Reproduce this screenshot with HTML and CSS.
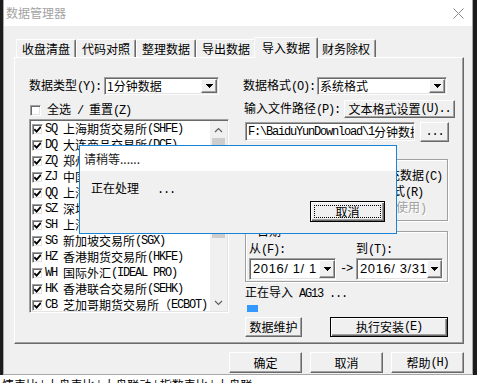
FILE: index.html
```html
<!DOCTYPE html>
<html lang="zh-CN">
<head>
    <meta charset="UTF-8">
    <title>数据管理器</title>
    <link rel="stylesheet" href="styles.css">
</head>
<body>
    <div class="desk">
        <!-- 主窗口 -->
        <div class="win">
            <div class="titlebar">
                <span class="title">数据管理器</span>
                <svg class="close" width="11" height="11" viewBox="0 0 11 11"><path d="M0.5 0.5L10.5 10.5M10.5 0.5L0.5 10.5" stroke="#8c8c8c" stroke-width="1" fill="none"/></svg>
            </div>

            <div class="client">
                <div class="tabs">
                    <div class="tab">收盘清盘</div>
                    <div class="tab">代码对照</div>
                    <div class="tab">整理数据</div>
                    <div class="tab">导出数据</div>
                    <div class="tab on">导入数据</div>
                    <div class="tab">财务除权</div>
                </div>

                <div class="panel">
                    <!-- 左列：市场列表 -->
                    <div class="col-l">
                        <div class="row">
                            <span class="lbl-type">数据类型<span class="a">(Y):</span></span>
                            <div class="combo sunk w-type">
                                <span class="val">1分钟数据</span>
                                <span class="drop raised"><svg width="7" height="4" viewBox="0 0 7 4" shape-rendering="crispEdges"><path d="M0 0h7v1H0zM1 1h5v1H1zM2 2h3v1H2zM3 3h1v1H3z"/></svg></span>
                            </div>
                        </div>

                        <div class="row check-all">
                            <span class="chk sunk"></span>
                            <span class="chk-text">全选<span class="a"> / </span>重置<span class="a">(Z)</span></span>
                        </div>

                        <div class="listbox sunk">
                            <div class="items">
                                <div class="item"><span class="chk sunk"><svg width="7" height="7" viewBox="0 0 7 7"><path d="M0.3 3.2L2.6 5.6L6.8 0.8" stroke="#000" stroke-width="1.8" fill="none"/></svg></span><span class="a">SQ </span>上海期货交易所<span class="a">(SHFE)</span></div>
                                <div class="item"><span class="chk sunk"><svg width="7" height="7" viewBox="0 0 7 7"><path d="M0.3 3.2L2.6 5.6L6.8 0.8" stroke="#000" stroke-width="1.8" fill="none"/></svg></span><span class="a">DQ </span>大连商品交易所<span class="a">(DCE)</span></div>
                                <div class="item"><span class="chk sunk"><svg width="7" height="7" viewBox="0 0 7 7"><path d="M0.3 3.2L2.6 5.6L6.8 0.8" stroke="#000" stroke-width="1.8" fill="none"/></svg></span><span class="a">ZQ </span>郑州商品交易所<span class="a">(CZCE)</span></div>
                                <div class="item"><span class="chk sunk"><svg width="7" height="7" viewBox="0 0 7 7"><path d="M0.3 3.2L2.6 5.6L6.8 0.8" stroke="#000" stroke-width="1.8" fill="none"/></svg></span><span class="a">ZJ </span>中国金融期货交易所</div>
                                <div class="item"><span class="chk sunk"><svg width="7" height="7" viewBox="0 0 7 7"><path d="M0.3 3.2L2.6 5.6L6.8 0.8" stroke="#000" stroke-width="1.8" fill="none"/></svg></span><span class="a">QQ </span>上海黄金交易所</div>
                                <div class="item"><span class="chk sunk"><svg width="7" height="7" viewBox="0 0 7 7"><path d="M0.3 3.2L2.6 5.6L6.8 0.8" stroke="#000" stroke-width="1.8" fill="none"/></svg></span><span class="a">SZ </span>深圳证券交易所</div>
                                <div class="item"><span class="chk sunk"><svg width="7" height="7" viewBox="0 0 7 7"><path d="M0.3 3.2L2.6 5.6L6.8 0.8" stroke="#000" stroke-width="1.8" fill="none"/></svg></span><span class="a">SH </span>上海证券交易所</div>
                                <div class="item"><span class="chk sunk"><svg width="7" height="7" viewBox="0 0 7 7"><path d="M0.3 3.2L2.6 5.6L6.8 0.8" stroke="#000" stroke-width="1.8" fill="none"/></svg></span><span class="a">SG </span>新加坡交易所<span class="a">(SGX)</span></div>
                                <div class="item"><span class="chk sunk"><svg width="7" height="7" viewBox="0 0 7 7"><path d="M0.3 3.2L2.6 5.6L6.8 0.8" stroke="#000" stroke-width="1.8" fill="none"/></svg></span><span class="a">HZ </span>香港期货交易所<span class="a">(HKFE)</span></div>
                                <div class="item"><span class="chk sunk"><svg width="7" height="7" viewBox="0 0 7 7"><path d="M0.3 3.2L2.6 5.6L6.8 0.8" stroke="#000" stroke-width="1.8" fill="none"/></svg></span><span class="a">WH </span>国际外汇<span class="a">(IDEAL PRO)</span></div>
                                <div class="item"><span class="chk sunk"><svg width="7" height="7" viewBox="0 0 7 7"><path d="M0.3 3.2L2.6 5.6L6.8 0.8" stroke="#000" stroke-width="1.8" fill="none"/></svg></span><span class="a">HK </span>香港联合交易所<span class="a">(SEHK)</span></div>
                                <div class="item"><span class="chk sunk"><svg width="7" height="7" viewBox="0 0 7 7"><path d="M0.3 3.2L2.6 5.6L6.8 0.8" stroke="#000" stroke-width="1.8" fill="none"/></svg></span><span class="a">CB </span>芝加哥期货交易所（<span class="a">ECBOT)</span></div>
                            </div>
                            <div class="vscroll">
                                <span class="sarrow"><svg width="9" height="6" viewBox="0 0 9 6"><path d="M1 5L4.5 1.5L8 5" stroke="#606060" stroke-width="1.2" fill="none"/></svg></span>
                                <span class="thumb"></span>
                                <span class="sarrow down"><svg width="9" height="6" viewBox="0 0 9 6"><path d="M1 1L4.5 4.5L8 1" stroke="#606060" stroke-width="1.2" fill="none"/></svg></span>
                            </div>
                        </div>
                    </div>

                    <!-- 右列：导入设置 -->
                    <div class="col-r">
                        <div class="row">
                            <span class="lbl-fmt">数据格式<span class="a">(O):</span></span>
                            <div class="combo sunk w-fmt">
                                <span class="val">系统格式</span>
                                <span class="drop raised"><svg width="7" height="4" viewBox="0 0 7 4" shape-rendering="crispEdges"><path d="M0 0h7v1H0zM1 1h5v1H1zM2 2h3v1H2zM3 3h1v1H3z"/></svg></span>
                            </div>
                        </div>

                        <div class="row path-row">
                            <span class="lbl-path">输入文件路径<span class="a">(P):</span></span>
                            <span class="btn raised btn-txtfmt">文本格式设置<span class="a">(U)..</span></span>
                        </div>

                        <div class="row file-row">
                            <span class="input sunk"><span class="a">F:\BaiduYunDownload\1</span>分钟数据</span>
                            <span class="btn raised btn-browse"><span class="a">...</span></span>
                        </div>

                        <div class="group g-mode">
                            <div class="opt o1">补充数据<span class="a">(C)</span></div>
                            <div class="opt o2">按文本格式<span class="a">(R)</span></div>
                            <div class="opt o3 off"><span class="a">(</span>暂不使用<span class="a">)</span></div>
                        </div>

                        <div class="group g-date">
                            <span class="cap">日期</span>
                            <div class="date-grid">
                                <span>从<span class="a">(F):</span></span>
                                <span></span>
                                <span>到<span class="a">(T):</span></span>
                                <div class="datebox sunk">
                                    <span class="dval">2016/ 1/ 1</span>
                                    <span class="drop raised"><svg width="7" height="4" viewBox="0 0 7 4" shape-rendering="crispEdges"><path d="M0 0h7v1H0zM1 1h5v1H1zM2 2h3v1H2zM3 3h1v1H3z"/></svg></span>
                                </div>
                                <span class="arrow a">-&gt;</span>
                                <div class="datebox sunk">
                                    <span class="dval">2016/ 3/31</span>
                                    <span class="drop raised"><svg width="7" height="4" viewBox="0 0 7 4" shape-rendering="crispEdges"><path d="M0 0h7v1H0zM1 1h5v1H1zM2 2h3v1H2zM3 3h1v1H3z"/></svg></span>
                                </div>
                            </div>
                        </div>

                        <div class="status">正在导入<span class="a"> AG13 ...</span></div>
                        <div class="progress"><span class="bar" style="width: 11px"></span></div>

                        <div class="row act-row">
                            <span class="btn raised btn-maint">数据维护</span>
                            <span class="btn def btn-run">执行安装<span class="a">(E)</span></span>
                        </div>
                    </div>
                </div>

                <div class="footer">
                    <span class="btn raised">确定</span>
                    <span class="btn raised">取消</span>
                    <span class="btn raised">帮助<span class="a">(H)</span></span>
                </div>
            </div>
        </div>

        <!-- 窗口下方露出的行情软件 -->
        <div class="under">情表比 | 大盘表比 | 大盘联动 | 指数表比 | 大盘联</div>

        <!-- 进度对话框 -->
        <div class="wait">
            <div class="wait-title">请稍等......</div>
            <div class="wait-body">
                <div class="wait-msg">正在处理<span class="a dots">...</span></div>
                <span class="btn def btn-cancel"><span class="focus">取消</span></span>
            </div>
        </div>
    </div>
</body>
</html>
```

FILE: styles.css
```css
/* 基础样式 */
* {
    margin: 0;
    padding: 0;
    box-sizing: border-box;
}

html, body {
    background: #1c1c1c;
}

body {
    width: 477px;
    height: 383px;
    overflow: hidden;
    font-family: "Noto Sans CJK SC", "Liberation Sans", sans-serif;
    font-size: 12px;
    line-height: 14px;
    color: #000;
}

/* 宋体半角字母（等宽 6px） */
.a {
    font-family: "Liberation Mono", "Noto Sans CJK SC", monospace;
    font-size: 12px;
    letter-spacing: -1.2px;
    white-space: pre;
}

.desk {
    position: relative;
    width: 477px;
    height: 383px;
    overflow: hidden;
}

/* 经典3D边框 */
.sunk {
    background: #fff;
    border: 1px solid;
    border-color: #a0a0a0 #fff #fff #a0a0a0;
    box-shadow: inset 1px 1px #696969, inset -1px -1px #e3e3e3;
}

.raised {
    background: #f0f0f0;
    border: 1px solid;
    border-color: #fff #696969 #696969 #fff;
    box-shadow: inset -1px -1px #a0a0a0;
}

.btn {
    display: flex;
    align-items: center;
    justify-content: center;
    white-space: nowrap;
}

.btn.def {
    background: #f0f0f0;
    border: 1px solid #000;
    box-shadow: inset 1px 1px #fff, inset -1px -1px #696969, inset -2px -2px #a0a0a0;
}

/* 主窗口 */
.win {
    margin-left: 3px;
    width: 470px;
    height: 375px;
    background: #f0f0f0;
    border: 1px solid #a8a8a8;
    border-top: 0;
}

.titlebar {
    height: 26px;
    background: #fff;
    display: flex;
    align-items: center;
    justify-content: space-between;
    padding: 0 8px 0 2px;
}

.title {
    color: #a3a3a3;
}

.close {
    display: block;
}

.client {
    padding: 11px 0 0 10px;
}

/* 选项卡 */
.tabs {
    display: flex;
    align-items: flex-end;
    height: 20px;
    margin-left: 2px;
}

.tab {
    width: 60px;
    height: 18px;
    display: flex;
    align-items: center;
    justify-content: center;
    border-top: 1px solid #fff;
    border-left: 1px solid #fff;
    border-right: 1px solid #696969;
    box-shadow: inset -1px 0 #a0a0a0;
    border-radius: 2px 2px 0 0;
}

.tab.on {
    width: 64px;
    height: 21px;
    margin: 0 -2px -1px;
    padding-bottom: 1px;
    position: relative;
    z-index: 1;
    background: #f0f0f0;
}

.panel {
    display: flex;
    gap: 14px;
    width: 450px;
    height: 287px;
    padding: 19px 0 0 14px;
    border-top: 1px solid #fff;
    border-left: 1px solid #fff;
    border-right: 1px solid #696969;
    border-bottom: 1px solid #696969;
    box-shadow: inset -1px -1px #a0a0a0;
}

.col-l {
    width: 200px;
    display: flex;
    flex-direction: column;
}

.col-r {
    width: 212px;
    display: flex;
    flex-direction: column;
}

.row {
    display: flex;
    align-items: center;
    height: 18px;
    flex-shrink: 0;
    white-space: nowrap;
}

/* 下拉框 */
.combo {
    display: flex;
    align-items: center;
    height: 18px;
    padding: 1px;
}

.combo .val {
    padding-left: 1px;
}

.drop {
    margin-left: auto;
    width: 16px;
    height: 100%;
    display: flex;
    align-items: center;
    justify-content: center;
}

.drop svg {
    display: block;
}

.lbl-type {
    width: 75px;
}

.w-type {
    width: 115px;
}

.lbl-fmt {
    width: 74px;
}

.w-fmt {
    width: 130px;
}

/* 复选框 */
.chk {
    width: 11px;
    height: 11px;
    flex-shrink: 0;
    display: flex;
    align-items: center;
    justify-content: center;
}

.chk svg {
    display: block;
}

.check-all {
    margin-top: 9px;
    height: 12px;
}

.check-all .chk {
    margin-left: 1px;
}

.chk-text {
    margin-left: 6px;
}

/* 市场列表 */
.listbox {
    display: flex;
    margin-top: 3px;
    height: 194px;
    padding: 1px;
}

.items {
    flex: 1;
    overflow: hidden;
}

.item {
    display: flex;
    align-items: center;
    height: 16px;
    padding-left: 1px;
    white-space: nowrap;
}

.item .chk {
    margin-right: 2px;
}

.vscroll {
    width: 17px;
    background: #f0f0f0;
    display: flex;
    flex-direction: column;
}

.sarrow {
    height: 17px;
    flex-shrink: 0;
    display: flex;
    align-items: center;
    justify-content: center;
}

.sarrow.down {
    margin-top: auto;
}

.thumb {
    height: 100px;
    margin: 0 2px;
    background: #cdcdcd;
}

/* 右列 */
.path-row {
    margin-top: 5px;
    height: 17px;
}

.lbl-path {
    width: 100px;
    margin-left: 1px;
}

.btn-txtfmt {
    width: 111px;
    height: 18px;
}

.file-row {
    margin-top: 5px;
    height: 20px;
    align-items: flex-start;
}

.input {
    width: 170px;
    height: 19px;
    margin-left: 2px;
    padding: 0 0 0 2px;
    display: flex;
    align-items: center;
    overflow: hidden;
    white-space: nowrap;
}

.btn-browse {
    width: 29px;
    height: 20px;
    margin-left: 5px;
}

.group {
    margin-left: 2px;
    width: 203px;
    border: 1px solid #a0a0a0;
    box-shadow: inset 1px 1px #fff, 1px 1px #fff;
    flex-shrink: 0;
}

.g-mode {
    margin-top: 17px;
    height: 62px;
    padding-top: 7px;
}

.opt {
    height: 16px;
    line-height: 16px;
    white-space: nowrap;
}

.o1 { padding-left: 130px; }
.o2 { padding-left: 99px; }
.o3 { padding-left: 120px; }

.opt.off {
    color: #a0a0a0;
    text-shadow: 1px 1px #fff;
}

.g-date {
    margin-top: 10px;
    height: 51px;
    padding-left: 3px;
    display: flex;
    flex-direction: column;
}

.cap {
    align-self: flex-start;
    margin: -7px 0 0 6px;
    padding: 0 2px;
    height: 12px;
    line-height: 12px;
    background: #f0f0f0;
}

.date-grid {
    display: grid;
    grid-template-columns: 87px 20px 87px;
    row-gap: 2px;
    margin-top: 5px;
    line-height: 12px;
}

.datebox {
    display: flex;
    align-items: center;
    height: 22px;
    padding: 1px 0 1px 1px;
}

.datebox .drop {
    height: 18px;
}

.dval {
    font-family: "Liberation Sans", sans-serif;
    font-size: 13px;
    letter-spacing: 0.6px;
    white-space: pre;
    padding-left: 2px;
}

.arrow {
    align-self: center;
    text-align: center;
}

.status {
    margin: 3px 0 0 2px;
    height: 14px;
    white-space: nowrap;
}

.progress {
    margin: 6px 0 0 4px;
    height: 7px;
}

.bar {
    display: block;
    height: 7px;
    background: #3399ff;
}

.act-row {
    margin: 5px 0 0 2px;
    height: 20px;
}

.btn-maint {
    width: 57px;
    height: 20px;
}

.btn-run {
    width: 118px;
    height: 20px;
    margin-left: 28px;
}

/* 底部按钮 */
.footer {
    display: flex;
    justify-content: flex-end;
    gap: 8px;
    margin-top: 8px;
    padding-right: 8px;
}

.footer .btn {
    width: 73px;
    height: 21px;
}

/* 下层软件 */
.under {
    height: 8px;
    overflow: hidden;
    background: #fff;
    padding-left: 2px;
    line-height: 20px;
    white-space: nowrap;
    color: #000;
}

/* 请稍等对话框 */
.wait {
    position: absolute;
    left: 79px;
    top: 145px;
    width: 318px;
    height: 89px;
    border: 1px solid #1883d7;
    background: #f0f0f0;
}

.wait-title {
    height: 25px;
    line-height: 25px;
    padding-left: 4px;
    background: #fff;
    color: #1a1a1a;
}

.wait-body {
    display: flex;
    flex-direction: column;
    padding: 11px 11px 0 11px;
}

.wait-msg {
    height: 12px;
    line-height: 12px;
    white-space: nowrap;
}

.dots {
    margin-left: 18px;
}

.btn-cancel {
    align-self: flex-end;
    width: 75px;
    height: 21px;
    margin-top: 7px;
    padding: 3px;
}

.focus {
    flex: 1;
    align-self: stretch;
    display: flex;
    align-items: center;
    justify-content: center;
    border: 1px dotted #000;
}
```
